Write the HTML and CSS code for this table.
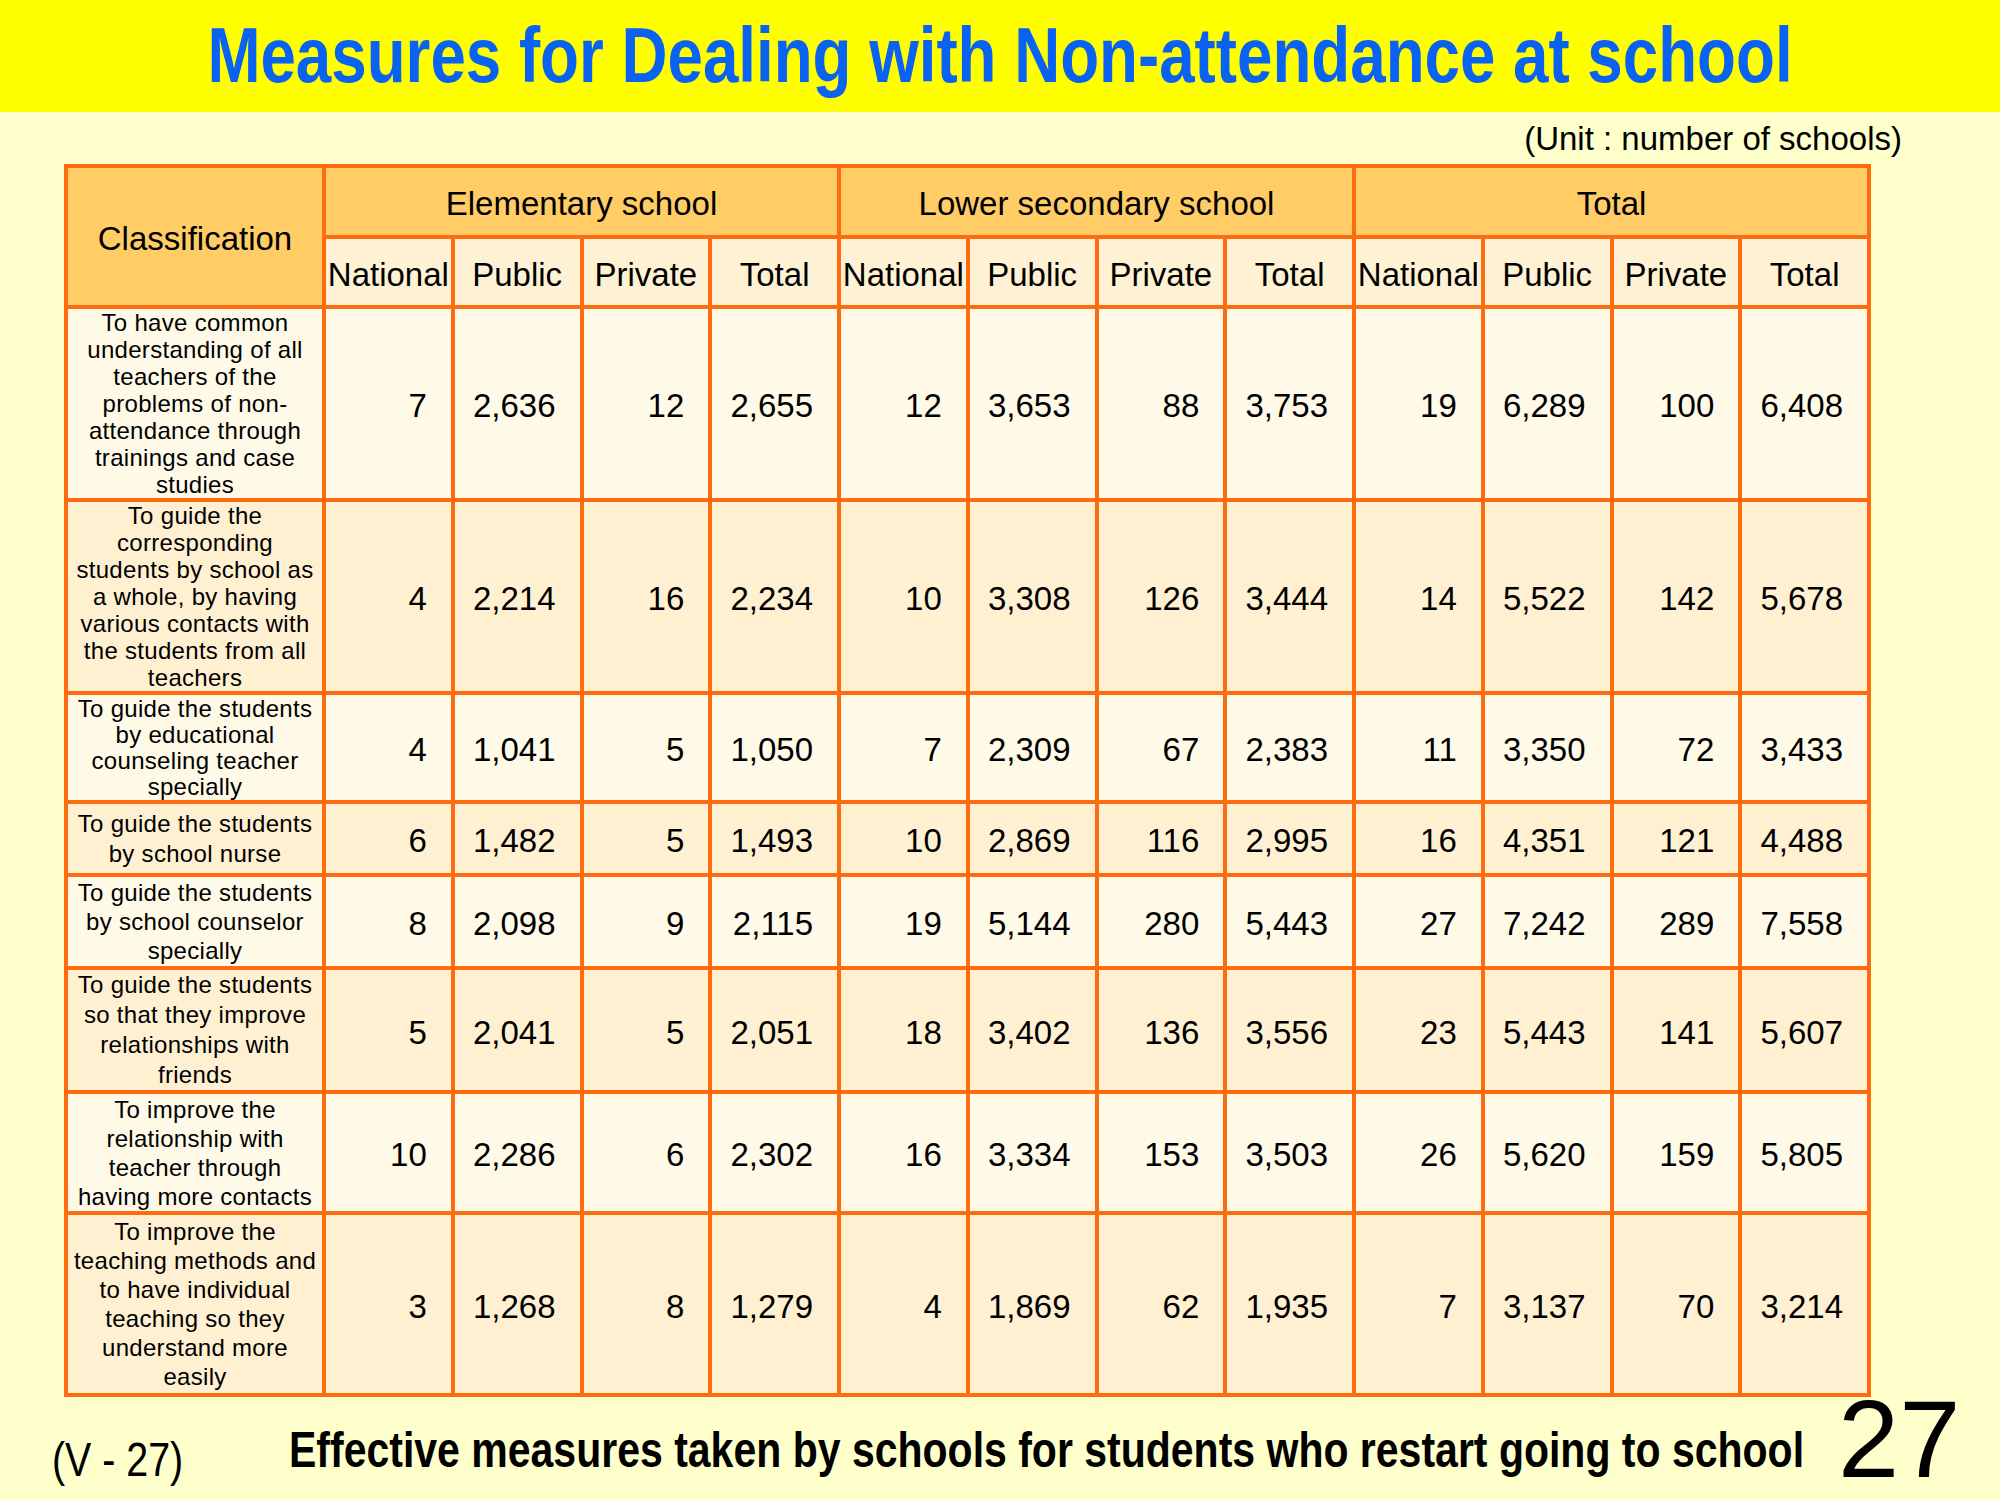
FILE: index.html
```html
<!DOCTYPE html>
<html lang="en">
<head>
<meta charset="utf-8">
<title>Measures for Dealing with Non-attendance at school</title>
<link rel="stylesheet" href="styles.css">
</head>
<body>
<div class="slide">
  <header class="band">
    <h1 class="title">Measures for Dealing with Non-attendance at school</h1>
  </header>
  <div class="unit">(Unit : number of schools)</div>
  <table class="grid">
    <colgroup>
      <col class="c-class">
      <col><col><col><col><col><col><col><col><col><col><col><col>
    </colgroup>
    <thead>
      <tr class="h1">
        <th rowspan="2" class="hd">Classification</th>
        <th colspan="4" class="hd">Elementary school</th>
        <th colspan="4" class="hd">Lower secondary school</th>
        <th colspan="4" class="hd">Total</th>
      </tr>
      <tr class="h2">
        <th class="sub">National</th><th class="sub">Public</th><th class="sub">Private</th><th class="sub">Total</th>
        <th class="sub">National</th><th class="sub">Public</th><th class="sub">Private</th><th class="sub">Total</th>
        <th class="sub">National</th><th class="sub">Public</th><th class="sub">Private</th><th class="sub">Total</th>
      </tr>
    </thead>
    <tbody>
      <tr class="r1 light">
        <td class="lbl lh27">To have common<br>understanding of all<br>teachers of the<br>problems of non-<br>attendance through<br>trainings and case<br>studies</td>
        <td>7</td><td>2,636</td><td>12</td><td>2,655</td>
        <td>12</td><td>3,653</td><td>88</td><td>3,753</td>
        <td>19</td><td>6,289</td><td>100</td><td>6,408</td>
      </tr>
      <tr class="r2 dark">
        <td class="lbl lh27">To guide the<br>corresponding<br>students by school as<br>a whole, by having<br>various contacts with<br>the students from all<br>teachers</td>
        <td>4</td><td>2,214</td><td>16</td><td>2,234</td>
        <td>10</td><td>3,308</td><td>126</td><td>3,444</td>
        <td>14</td><td>5,522</td><td>142</td><td>5,678</td>
      </tr>
      <tr class="r3 light">
        <td class="lbl lh26">To guide the students<br>by educational<br>counseling teacher<br>specially</td>
        <td>4</td><td>1,041</td><td>5</td><td>1,050</td>
        <td>7</td><td>2,309</td><td>67</td><td>2,383</td>
        <td>11</td><td>3,350</td><td>72</td><td>3,433</td>
      </tr>
      <tr class="r4 dark">
        <td class="lbl lh30">To guide the students<br>by school nurse</td>
        <td>6</td><td>1,482</td><td>5</td><td>1,493</td>
        <td>10</td><td>2,869</td><td>116</td><td>2,995</td>
        <td>16</td><td>4,351</td><td>121</td><td>4,488</td>
      </tr>
      <tr class="r5 light">
        <td class="lbl lh29">To guide the students<br>by school counselor<br>specially</td>
        <td>8</td><td>2,098</td><td>9</td><td>2,115</td>
        <td>19</td><td>5,144</td><td>280</td><td>5,443</td>
        <td>27</td><td>7,242</td><td>289</td><td>7,558</td>
      </tr>
      <tr class="r6 dark">
        <td class="lbl lh30">To guide the students<br>so that they improve<br>relationships with<br>friends</td>
        <td>5</td><td>2,041</td><td>5</td><td>2,051</td>
        <td>18</td><td>3,402</td><td>136</td><td>3,556</td>
        <td>23</td><td>5,443</td><td>141</td><td>5,607</td>
      </tr>
      <tr class="r7 light">
        <td class="lbl lh29">To improve the<br>relationship with<br>teacher through<br>having more contacts</td>
        <td>10</td><td>2,286</td><td>6</td><td>2,302</td>
        <td>16</td><td>3,334</td><td>153</td><td>3,503</td>
        <td>26</td><td>5,620</td><td>159</td><td>5,805</td>
      </tr>
      <tr class="r8 dark">
        <td class="lbl lh29">To improve the<br>teaching methods and<br>to have individual<br>teaching so they<br>understand more<br>easily</td>
        <td>3</td><td>1,268</td><td>8</td><td>1,279</td>
        <td>4</td><td>1,869</td><td>62</td><td>1,935</td>
        <td>7</td><td>3,137</td><td>70</td><td>3,214</td>
      </tr>
    </tbody>
  </table>
  <footer class="foot">
    <div class="vnum"><span class="squeeze">(V - 27)</span></div>
    <div class="caption"><span class="stretch">Effective measures taken by schools for students who restart going to school</span></div>
    <div class="page">27</div>
  </footer>
</div>
</body>
</html>
```
FILE: styles.css
```css
html, body {
  margin: 0;
  padding: 0;
}
body {
  background: #FFFFCC;
  font-family: "Liberation Sans", Arial, sans-serif;
  color: #000;
}
.slide {
  width: 2000px;
  height: 1500px;
  background: #FFFFCC;
}
.band {
  background: #FFFF00;
  height: 112px;
  box-sizing: border-box;
  padding-top: 17px;
}
.title {
  margin: 0;
  text-align: center;
  font-family: "Liberation Sans", Arial, sans-serif;
  font-weight: bold;
  font-size: 77px;
  line-height: 77px;
  color: #0A62F2;
  white-space: nowrap;
  transform: scaleX(0.827);
  transform-origin: 50% 50%;
}
.unit {
  margin-top: 10px;
  text-align: right;
  padding-right: 98px;
  font-size: 33px;
  line-height: 33px;
  height: 33px;
}
.grid {
  margin-top: 9px;
  margin-left: 64px;
  width: 1807px;
  border-collapse: collapse;
  table-layout: fixed;
  border: 4px solid #FF6C10;
}
.c-class { width: 258px; }
.grid th, .grid td {
  border: 4px solid #FF6C10;
  padding: 5px 0 0 0;
  vertical-align: middle;
  font-weight: normal;
}
.hd {
  background: #FFCC66;
  font-size: 33px;
  text-align: center;
}
.sub {
  background: #FFF2D4;
  font-size: 33px;
  text-align: center;
  white-space: nowrap;
}
.h1 { height: 71px; }
.h2 { height: 70px; }
.r1, .r2 { height: 193px; }
.r3 { height: 109px; }
.r4 { height: 73px; }
.r5 { height: 93px; }
.r6 { height: 124px; }
.r7 { height: 121px; }
.r8 { height: 182px; }
.light td { background: #FFF9E8; }
.dark td { background: #FFF0D2; }
.grid td {
  font-size: 33px;
  text-align: right;
  padding-right: 24px;
}
.grid td.lbl {
  text-align: center;
  padding: 0;
  font-size: 24px;
  letter-spacing: 0.3px;
  white-space: nowrap;
}
.grid td.lh26 { line-height: 26px; }
.grid td.lh27 { line-height: 27px; }
.grid td.lh29 { line-height: 29px; }
.grid td.lh30 { line-height: 30px; }
.foot {
  display: flex;
  align-items: flex-start;
  padding-left: 52px;
}
.squeeze {
  display: inline-block;
  white-space: nowrap;
  transform: scaleX(0.82);
  transform-origin: 0 50%;
}
.stretch {
  display: inline-block;
  white-space: nowrap;
  transform: scaleY(1.22);
  transform-origin: 0 0;
}
.vnum {
  flex: none;
  width: 237px;
  margin-top: 39px;
  font-size: 48px;
  line-height: 48px;
}
.caption {
  flex: none;
  width: 1549px;
  margin-top: 29px;
  font-weight: bold;
  font-size: 41px;
  line-height: 41px;
  white-space: nowrap;
}
.page {
  flex: none;
  margin-top: -13px;
  font-size: 110px;
  line-height: 110px;
}
```
